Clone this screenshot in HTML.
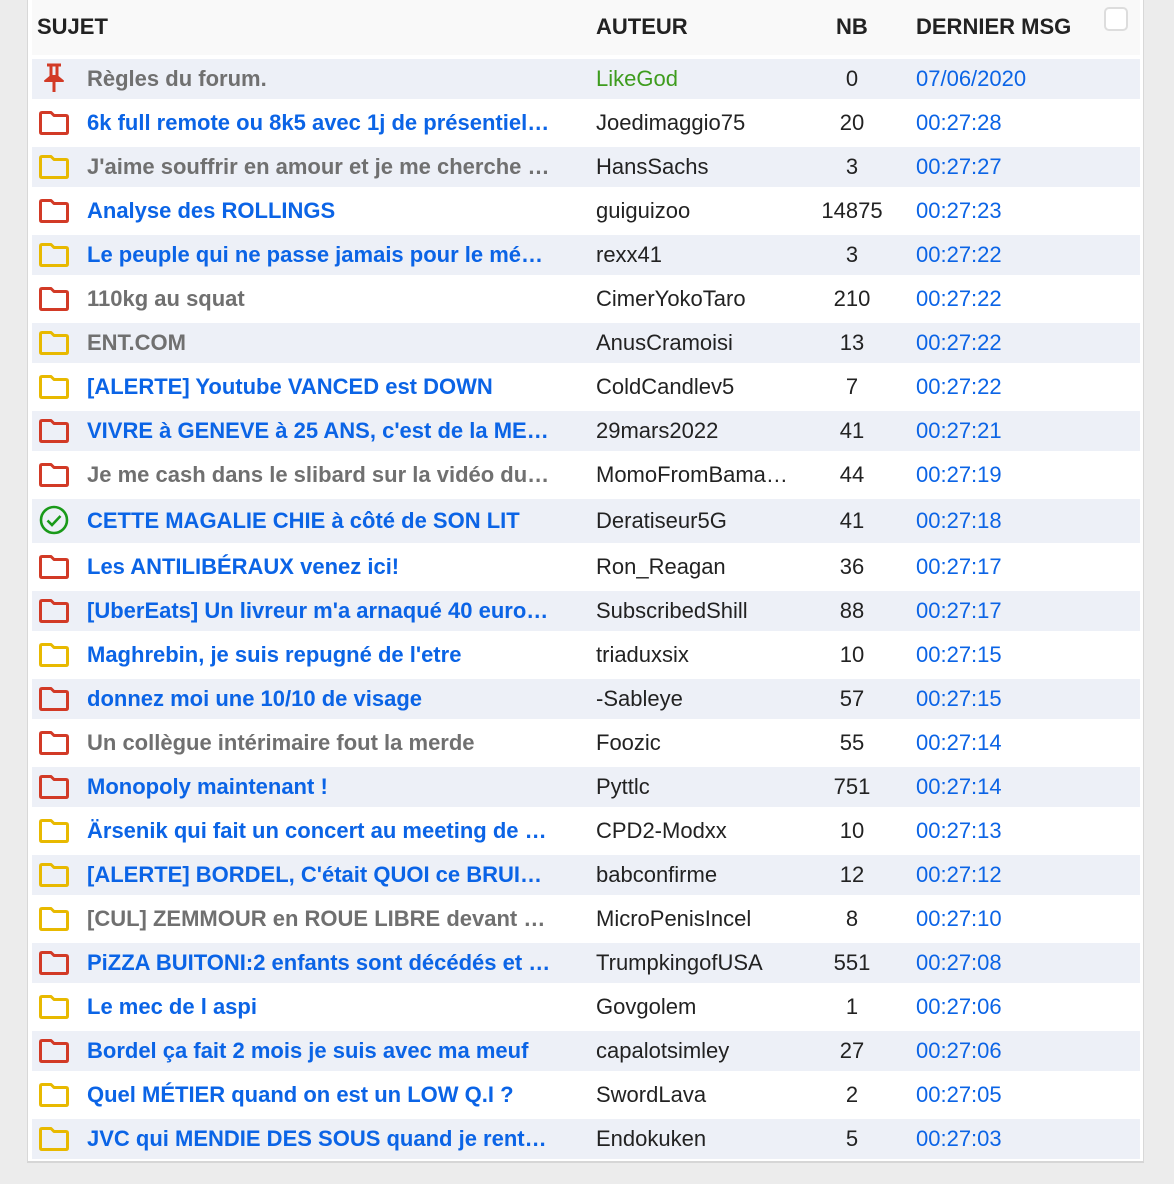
<!DOCTYPE html>
<html><head><meta charset="utf-8"><style>
html,body{margin:0;padding:0;background:#ececec;width:1174px;height:1184px;overflow:hidden;font-family:"Liberation Sans",Arial,sans-serif;}
.panel{position:absolute;left:27px;top:0;width:1117px;height:1163px;background:#fff;border-left:1px solid #d8d8d8;border-right:1px solid #d8d8d8;border-bottom:2px solid #d6d6d6;box-sizing:border-box;}
.head{position:absolute;left:32px;top:0;width:1108px;height:55px;background:#f9f9f9;}
.h{position:absolute;top:14px;font-weight:bold;font-size:22px;color:#222;}
.cb{position:absolute;left:1104px;top:7px;width:24px;height:24px;border:2px solid #ddd;border-radius:5px;background:#fff;box-sizing:border-box;}
.row{position:absolute;left:32px;width:1108px;height:40px;}
.row.s{background:#edf0f7;}
.row > *{position:absolute;}
.ic{left:7px;top:8px;}
.t{left:55px;top:7px;width:470px;white-space:nowrap;overflow:hidden;font-size:22px;font-weight:bold;color:#0b64e6;}
.t.g{color:#707070;}
.a{left:564px;top:7px;width:196px;white-space:nowrap;overflow:hidden;font-size:22px;color:#222;}
.n{left:770px;width:100px;text-align:center;top:7px;font-size:22px;color:#222;}
.d{left:884px;top:7px;font-size:22px;color:#0b64e6;}
</style></head><body>
<div class="panel"></div>
<div class="head"></div>
<div class="h" style="left:37px">SUJET</div>
<div class="h" style="left:596px">AUTEUR</div>
<div class="h" style="left:836px">NB</div>
<div class="h" style="left:916px">DERNIER MSG</div>
<div class="cb"></div>
<svg width="0" height="0" style="position:absolute"><defs>
<symbol id="fr" viewBox="0 0 30 24"><path d="M1.5 3 Q1.5 1.5 3 1.5 H12 L15 4.5 H27 Q28.5 4.5 28.5 6 V21 Q28.5 22.5 27 22.5 H3 Q1.5 22.5 1.5 21 Z" fill="none" stroke="#d23a26" stroke-width="3" stroke-linejoin="round"/></symbol>
<symbol id="fy" viewBox="0 0 30 24"><path d="M1.5 3 Q1.5 1.5 3 1.5 H12 L15 4.5 H27 Q28.5 4.5 28.5 6 V21 Q28.5 22.5 27 22.5 H3 Q1.5 22.5 1.5 21 Z" fill="none" stroke="#e8b900" stroke-width="3" stroke-linejoin="round"/></symbol>
</defs></svg>
<div id="rows"></div>
<script>
var R=[
["p","Règles du forum.",1,"LikeGod","0","07/06/2020"],
["r","6k full remote ou 8k5 avec 1j de présentiel…",0,"Joedimaggio75","20","00:27:28"],
["y","J'aime souffrir en amour et je me cherche …",1,"HansSachs","3","00:27:27"],
["r","Analyse des ROLLINGS",0,"guiguizoo","14875","00:27:23"],
["y","Le peuple qui ne passe jamais pour le mé…",0,"rexx41","3","00:27:22"],
["r","110kg au squat",1,"CimerYokoTaro","210","00:27:22"],
["y","ENT.COM",1,"AnusCramoisi","13","00:27:22"],
["y","[ALERTE] Youtube VANCED est DOWN",0,"ColdCandlev5","7","00:27:22"],
["r","VIVRE à GENEVE à 25 ANS, c'est de la ME…",0,"29mars2022","41","00:27:21"],
["r","Je me cash dans le slibard sur la vidéo du…",1,"MomoFromBama…","44","00:27:19"],
["c","CETTE MAGALIE CHIE à côté de SON LIT",0,"Deratiseur5G","41","00:27:18"],
["r","Les ANTILIBÉRAUX venez ici!",0,"Ron_Reagan","36","00:27:17"],
["r","[UberEats] Un livreur m'a arnaqué 40 euro…",0,"SubscribedShill","88","00:27:17"],
["y","Maghrebin, je suis repugné de l'etre",0,"triaduxsix","10","00:27:15"],
["r","donnez moi une 10/10 de visage",0,"-Sableye","57","00:27:15"],
["r","Un collègue intérimaire fout la merde",1,"Foozic","55","00:27:14"],
["r","Monopoly maintenant !",0,"Pyttlc","751","00:27:14"],
["y","Ärsenik qui fait un concert au meeting de …",0,"CPD2-Modxx","10","00:27:13"],
["y","[ALERTE] BORDEL, C'était QUOI ce BRUI…",0,"babconfirme","12","00:27:12"],
["y","[CUL] ZEMMOUR en ROUE LIBRE devant …",1,"MicroPenisIncel","8","00:27:10"],
["r","PiZZA BUITONI:2 enfants sont décédés et …",0,"TrumpkingofUSA","551","00:27:08"],
["y","Le mec de l aspi",0,"Govgolem","1","00:27:06"],
["r","Bordel ça fait 2 mois je suis avec ma meuf",0,"capalotsimley","27","00:27:06"],
["y","Quel MÉTIER quand on est un LOW Q.I ?",0,"SwordLava","2","00:27:05"],
["y","JVC qui MENDIE DES SOUS quand je rent…",0,"Endokuken","5","00:27:03"]];
var h="",y=59;
R.forEach(function(r,i){
 var ic;
 if(r[0]=="p") ic='<svg class="ic" width="30" height="32" style="top:3px;left:7px" viewBox="0 0 30 32"><path d="M8 3H22" stroke="#d23a26" stroke-width="3" fill="none"/><path d="M12 3V15M18 3V15" stroke="#d23a26" stroke-width="3" fill="none"/><path d="M6 19H24L18 14H12Z" fill="#d23a26" stroke="#d23a26" stroke-width="2" stroke-linejoin="round"/><path d="M15 19V30" stroke="#d23a26" stroke-width="3"/></svg>';
 else if(r[0]=="c") ic='<svg class="ic" width="30" height="30" style="top:6px;left:7px" viewBox="0 0 30 30"><circle cx="15" cy="15" r="13" fill="none" stroke="#1a9a1a" stroke-width="2.6"/><path d="M8.5 15.5L13 20L21.5 11" fill="none" stroke="#1a9a1a" stroke-width="2.6"/></svg>';
 else ic='<svg class="ic" width="30" height="24" viewBox="0 0 30 24"><use href="#f'+r[0]+'"/></svg>';
 var tall=r[0]=="c";
 var tp=tall?'top:9px;':'';
 h+='<div class="row'+(i%2==0?' s':'')+'" style="top:'+y+'px;height:'+(tall?44:40)+'px">'+ic+
 '<div class="t'+(r[2]?' g':'')+'" style="'+tp+'">'+r[1]+'</div>'+
 '<div class="a" style="'+(r[3]=="LikeGod"?'color:#3e9c1e;':'')+tp+'">'+r[3]+'</div>'+
 '<div class="n" style="'+tp+'">'+r[4]+'</div><div class="d" style="'+tp+'">'+r[5]+'</div></div>';
 y+=tall?48:44;
});
document.getElementById("rows").innerHTML=h;
</script>
</body></html>
